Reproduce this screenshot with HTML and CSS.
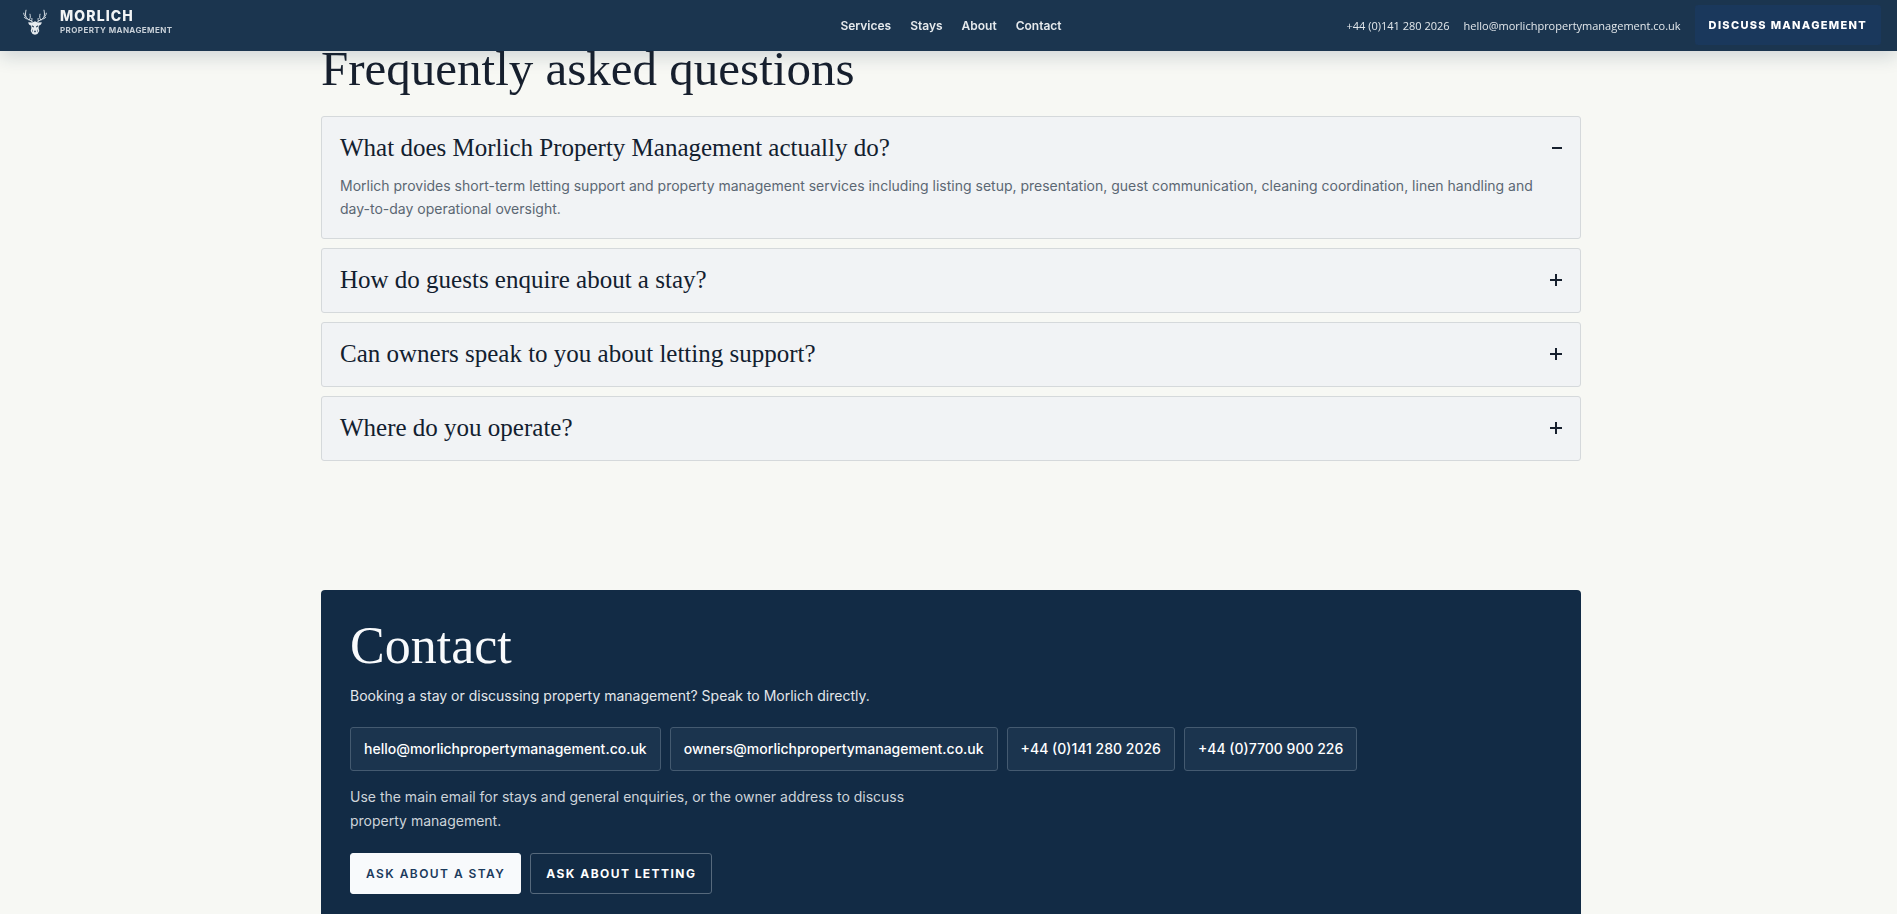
FILE: index.html
```
<!DOCTYPE html>
<html lang="en">
<head>
<meta charset="utf-8">
<title>Morlich Property Management</title>
<meta name="viewport" content="width=device-width, initial-scale=1">
<link rel="stylesheet" href="styles.css">
</head>
<body>
<header class="site-header">
  <a class="brand" href="#top">
    <svg class="brand-mark" viewBox="0 0 24 26" aria-hidden="true">
      <g fill="none" stroke="#d3dbe2" stroke-width="1" stroke-linecap="round" stroke-linejoin="round">
        <path d="M10 13.2C8.6 11 5 11.600 3.200 8.400 2.200 6.500 2.400 3.800 3 1.200M3.200 8.400C2 7.600 1 6.400.7 4.200M4.500 10C3.400 9.900 2 9.300 1.200 8.300M6.200 11C7.500 9.400 7.600 7.200 7 5.200M8.600 12.200C9 11.200 9.100 10.300 8.900 9.400"/>
        <path d="M14 13.200C15.400 11 19 11.600 20.800 8.400 21.800 6.500 21.600 3.800 21 1.200M20.800 8.400C22 7.600 23 6.400 23.300 4.200M19.500 10C20.600 9.900 22 9.300 22.800 8.300M17.800 11C16.500 9.400 16.400 7.200 17 5.200M15.400 12.200C15 11.200 14.900 10.300 15.100 9.400"/>
      </g>
      <path fill="#e6ebef" d="M12 12.200 14.600 13.400 18.800 13.200C18.400 15.300 17.200 16.300 15.800 16.700L15.600 19 16.300 22 14.400 25 12 25.800 9.600 25 7.700 22 8.400 19 8.200 16.700C6.800 16.300 5.600 15.300 5.200 13.200L9.400 13.400Z"/>
      <path fill="#1b344e" d="M9 16.300 11 17.600 10.700 18.600 9.200 17.700ZM15 16.300 13 17.600 13.300 18.600 14.800 17.700ZM11 21.800H13L12.600 23 12 23.500 11.400 23ZM9.200 20 10 23.300 9 22ZM14.800 20 14 23.300 15 22Z"/>
    </svg>
    <span class="brand-text">
      <span class="brand-name">MORLICH</span>
      <span class="brand-sub">PROPERTY MANAGEMENT</span>
    </span>
  </a>
  <nav class="site-nav" aria-label="Main">
    <a href="#services">Services</a>
    <a href="#stays">Stays</a>
    <a href="#about">About</a>
    <a href="#contact">Contact</a>
  </nav>
  <div class="header-actions">
    <a class="header-link" href="tel:+441412802026">+44 (0)141 280 2026</a>
    <a class="header-link" href="mailto:hello@morlichpropertymanagement.co.uk">hello@morlichpropertymanagement.co.uk</a>
    <a class="header-cta" href="#contact">DISCUSS MANAGEMENT</a>
  </div>
</header>

<main class="page" id="top">
  <div class="container">
    <section class="faq" aria-labelledby="faq-title">
      <h2 class="section-title" id="faq-title">Frequently asked questions</h2>
      <div class="faq-list">
        <details class="faq-item" open>
          <summary>What does Morlich Property Management actually do?<span class="faq-toggle" aria-hidden="true"></span></summary>
          <p>Morlich provides short-term letting support and property management services including listing setup, presentation, guest communication, cleaning coordination, linen handling and day-to-day operational oversight.</p>
        </details>
        <details class="faq-item">
          <summary>How do guests enquire about a stay?<span class="faq-toggle" aria-hidden="true"></span></summary>
          <p>Email or call us with your dates.</p>
        </details>
        <details class="faq-item">
          <summary>Can owners speak to you about letting support?<span class="faq-toggle" aria-hidden="true"></span></summary>
          <p>Yes, use the owner address below.</p>
        </details>
        <details class="faq-item">
          <summary>Where do you operate?<span class="faq-toggle" aria-hidden="true"></span></summary>
          <p>Get in touch to ask about your area.</p>
        </details>
      </div>
    </section>

    <section class="contact" id="contact" aria-labelledby="contact-title">
      <h2 class="contact-title" id="contact-title">Contact</h2>
      <p class="contact-intro">Booking a stay or discussing property management? Speak to Morlich directly.</p>
      <div class="chips">
        <a class="chip" href="mailto:hello@morlichpropertymanagement.co.uk">hello@morlichpropertymanagement.co.uk</a>
        <a class="chip" href="mailto:owners@morlichpropertymanagement.co.uk">owners@morlichpropertymanagement.co.uk</a>
        <a class="chip" href="tel:+441412802026">+44 (0)141 280 2026</a>
        <a class="chip" href="tel:+447700900226">+44 (0)7700 900 226</a>
      </div>
      <p class="contact-note">Use the main email for stays and general enquiries, or the owner address to discuss property management.</p>
      <div class="contact-actions">
        <a class="btn btn-solid" href="mailto:hello@morlichpropertymanagement.co.uk">ASK ABOUT A STAY</a>
        <a class="btn btn-outline" href="mailto:owners@morlichpropertymanagement.co.uk">ASK ABOUT LETTING</a>
      </div>
    </section>
  </div>
</main>
</body>
</html>
```
FILE: styles.css
```
:root {
  --sans: Inter, "Open Sans", sans-serif;
  --serif: "Liberation Serif", "Times New Roman", serif;
  --paper: #f7f8f4;
  --navy: #122b45;
  --ink: #17202e;
}

* { box-sizing: border-box; }

body {
  margin: 0;
  background: var(--paper);
  color: var(--ink);
  font-family: var(--sans);
  font-size: 14px;
}

a { color: inherit; text-decoration: none; }
h2, p { margin: 0; }

/* Header */
.site-header {
  position: fixed;
  top: 0;
  left: 0;
  right: 0;
  z-index: 10;
  display: grid;
  grid-template-columns: 1fr auto 1fr;
  align-items: center;
  padding: 5px 16px 6px 21px;
  background: rgba(20, 46, 73, 0.97);
  box-shadow: 0 6px 18px rgba(18, 43, 69, 0.16);
}

.brand {
  display: flex;
  align-items: center;
  gap: 13px;
  padding: 0 0 6px 2px;
}

.brand-mark { width: 24px; height: 26px; }
.brand-text { display: flex; flex-direction: column; }

.brand-name {
  color: #f2f4f5;
  font-size: 14px;
  font-weight: 800;
  line-height: 16px;
  letter-spacing: 0.08em;
}

.brand-sub {
  color: #c8d0d8;
  font-size: 8px;
  font-weight: 700;
  line-height: 12px;
  letter-spacing: 0.05em;
}

.site-nav {
  display: flex;
  gap: 19px;
  color: #e6eaed;
  font-size: 12px;
  font-weight: 600;
}

.header-actions {
  display: flex;
  align-items: center;
  justify-content: flex-end;
}

.header-link {
  margin-right: 14px;
  color: #e3e8ec;
  font-family: "Open Sans", sans-serif;
  font-size: 11px;
  font-weight: 500;
}

.header-cta {
  padding: 0 14px;
  border-radius: 3px;
  background: #1a385c;
  color: #fff;
  font-size: 11px;
  font-weight: 800;
  line-height: 40px;
  letter-spacing: 0.12em;
}

/* Page */
.page { padding: 44px 16px 0 21px; }
.container { max-width: 1260px; margin: 0 auto; }

.section-title {
  font-family: var(--serif);
  font-size: 49px;
  font-weight: 400;
  line-height: 49px;
}

/* FAQ */
.faq-list { display: grid; gap: 9px; margin-top: 23px; }

.faq-item {
  padding: 16px 18px 18px;
  border: 1px solid #d5d9db;
  border-radius: 3px;
  background: #f1f3f5;
}

.faq-item summary {
  display: flex;
  align-items: center;
  justify-content: space-between;
  color: #12202f;
  font-family: var(--serif);
  font-size: 25px;
  line-height: 29px;
  list-style: none;
  cursor: pointer;
}

.faq-toggle {
  width: 12px;
  height: 12px;
  background:
    linear-gradient(var(--ink), var(--ink)) center / 12px 2px no-repeat,
    linear-gradient(var(--ink), var(--ink)) center / 2px 12px no-repeat;
}

.faq-item[open] .faq-toggle {
  background: linear-gradient(var(--ink), var(--ink)) right center / 10px 2px no-repeat;
}

.faq-item p {
  margin-top: 12px;
  color: #5b6773;
  line-height: 23px;
}

/* Contact */
.contact {
  margin-top: 129px;
  padding: 30px 29px;
  border-radius: 4px;
  background: var(--navy);
  color: #fff;
}

.contact-title {
  color: #f8fafc;
  font-family: var(--serif);
  font-size: 52px;
  font-weight: 400;
  line-height: 52px;
}

.contact-intro { margin-top: 12px; color: #e3e7eb; line-height: 24px; }

.chips { display: flex; flex-wrap: wrap; gap: 9px; margin-top: 19px; }

.chip {
  padding: 0 13px;
  border: 1px solid #445a70;
  border-radius: 3px;
  background: #1b344e;
  font-weight: 500;
  line-height: 42px;
}

.contact-note {
  max-width: 580px;
  margin-top: 14px;
  color: #cdd4da;
  line-height: 24px;
}

.contact-actions { display: flex; flex-wrap: wrap; gap: 9px; margin-top: 20px; }

.btn {
  padding: 0 15px;
  border: 1px solid #56697c;
  border-radius: 3px;
  font-size: 12px;
  font-weight: 700;
  line-height: 39px;
  letter-spacing: 0.12em;
}

.btn-solid {
  border-color: #f8fafc;
  background: #f8fafc;
  color: #1b3a5c;
  font-weight: 600;
}
```
